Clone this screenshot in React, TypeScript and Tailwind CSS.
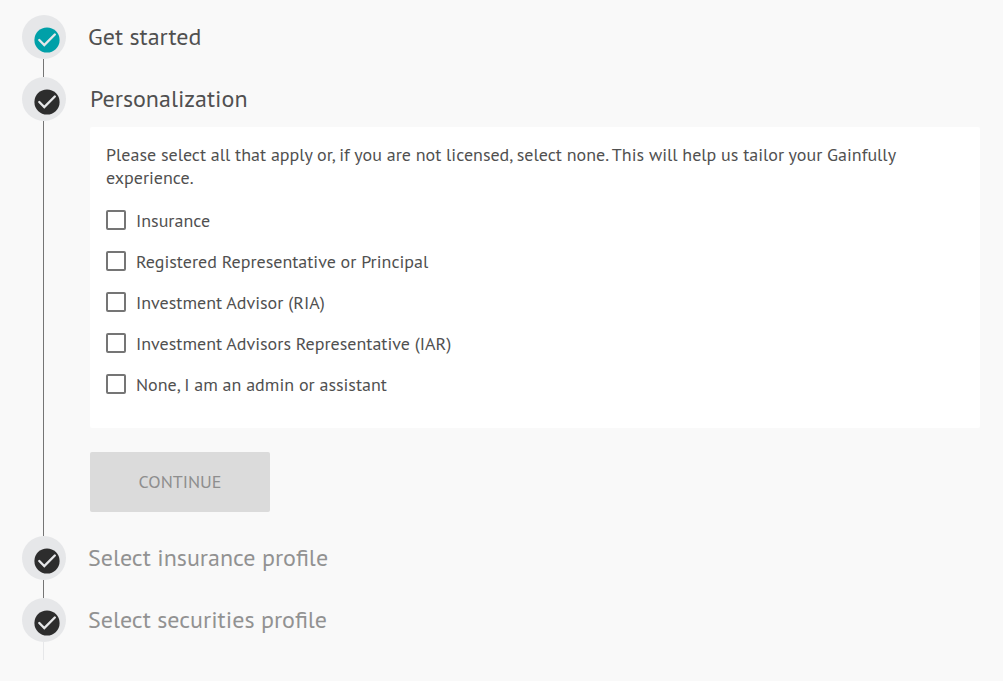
import { useState, type ReactNode } from "react";

const OPTIONS = [
  "Insurance",
  "Registered Representative or Principal",
  "Investment Advisor (RIA)",
  "Investment Advisors Representative (IAR)",
  "None, I am an admin or assistant",
];

function StepIcon({ done }: { done?: boolean }) {
  return (
    <span className="flex size-11 shrink-0 items-center justify-center rounded-full bg-[#e6e7e9] pt-1.5 pl-1.5">
      <svg viewBox="0 0 26 26" className="size-[26px]" aria-hidden="true">
        <circle cx="13" cy="13" r="12.6" className={done ? "fill-[#00a0a8]" : "fill-[#2d2d2d]"} />
        <path
          d="M5.3 13 L10.3 18 L20.8 7.5"
          fill="none"
          stroke="#e6e7e9"
          strokeWidth="2.4"
          strokeLinecap="round"
        />
      </svg>
    </span>
  );
}

type StepProps = {
  title: string;
  done?: boolean;
  active?: boolean;
  muted?: boolean;
  last?: boolean;
  children?: ReactNode;
};

function Step({ title, done, active, muted, last, children }: StepProps) {
  return (
    <li className={active ? "flex gap-6" : "flex gap-[22px]"}>
      <div className="flex w-11 shrink-0 flex-col items-center">
        <StepIcon done={done} />
        <span className={last ? "mr-px min-h-[18px] w-px flex-1 bg-[#e6e7e9]" : "mr-px min-h-[18px] w-px flex-1 bg-[#757575]"} />
      </div>
      <div className="min-w-0 flex-1">
        <h2
          className={
            muted
              ? "flex h-11 items-center text-2xl text-[#929292]"
              : "flex h-11 items-center text-2xl text-[#505050]"
          }
        >
          {title}
        </h2>
        {children}
      </div>
    </li>
  );
}

export default function App() {
  const [selected, setSelected] = useState<string[]>([]);

  const toggle = (option: string) =>
    setSelected((current) =>
      current.includes(option) ? current.filter((o) => o !== option) : [...current, option],
    );

  return (
    <main className="min-h-screen bg-[#f9f9f9] py-[15px] pr-[23px] pl-[22px] font-['PT_Sans','Lato',sans-serif] text-[#505050]">
      <ol>
        <Step title="Get started" done />
        <Step title="Personalization" active>
          <form className="pb-6" onSubmit={(event) => event.preventDefault()}>
            <fieldset
              aria-labelledby="question"
              className="mt-1.5 rounded-xs bg-white px-4 pt-4 pb-[23px]"
            >
              <p id="question" className="mb-[11px] text-lg leading-[23px]">
                Please select all that apply or, if you are not licensed, select none. This will
                help us tailor your Gainfully experience.
              </p>
              {OPTIONS.map((option) => (
                <label
                  key={option}
                  className="flex items-start gap-2.5 py-2.5 text-lg leading-[21px]"
                >
                  <input
                    type="checkbox"
                    checked={selected.includes(option)}
                    onChange={() => toggle(option)}
                    className="size-5 shrink-0 appearance-none rounded-xs border-2 border-[#757575] bg-white checked:bg-[#00a0a8]"
                  />
                  {option}
                </label>
              ))}
            </fieldset>
            <button
              type="submit"
              disabled={selected.length === 0}
              className="mt-6 h-[60px] w-[180px] rounded-xs bg-[#00a0a8] text-lg text-white disabled:bg-[#dbdbdb] disabled:text-[#8e8e8e]"
            >
              CONTINUE
            </button>
          </form>
        </Step>
        <Step title="Select insurance profile" muted />
        <Step title="Select securities profile" muted last />
      </ol>
    </main>
  );
}
